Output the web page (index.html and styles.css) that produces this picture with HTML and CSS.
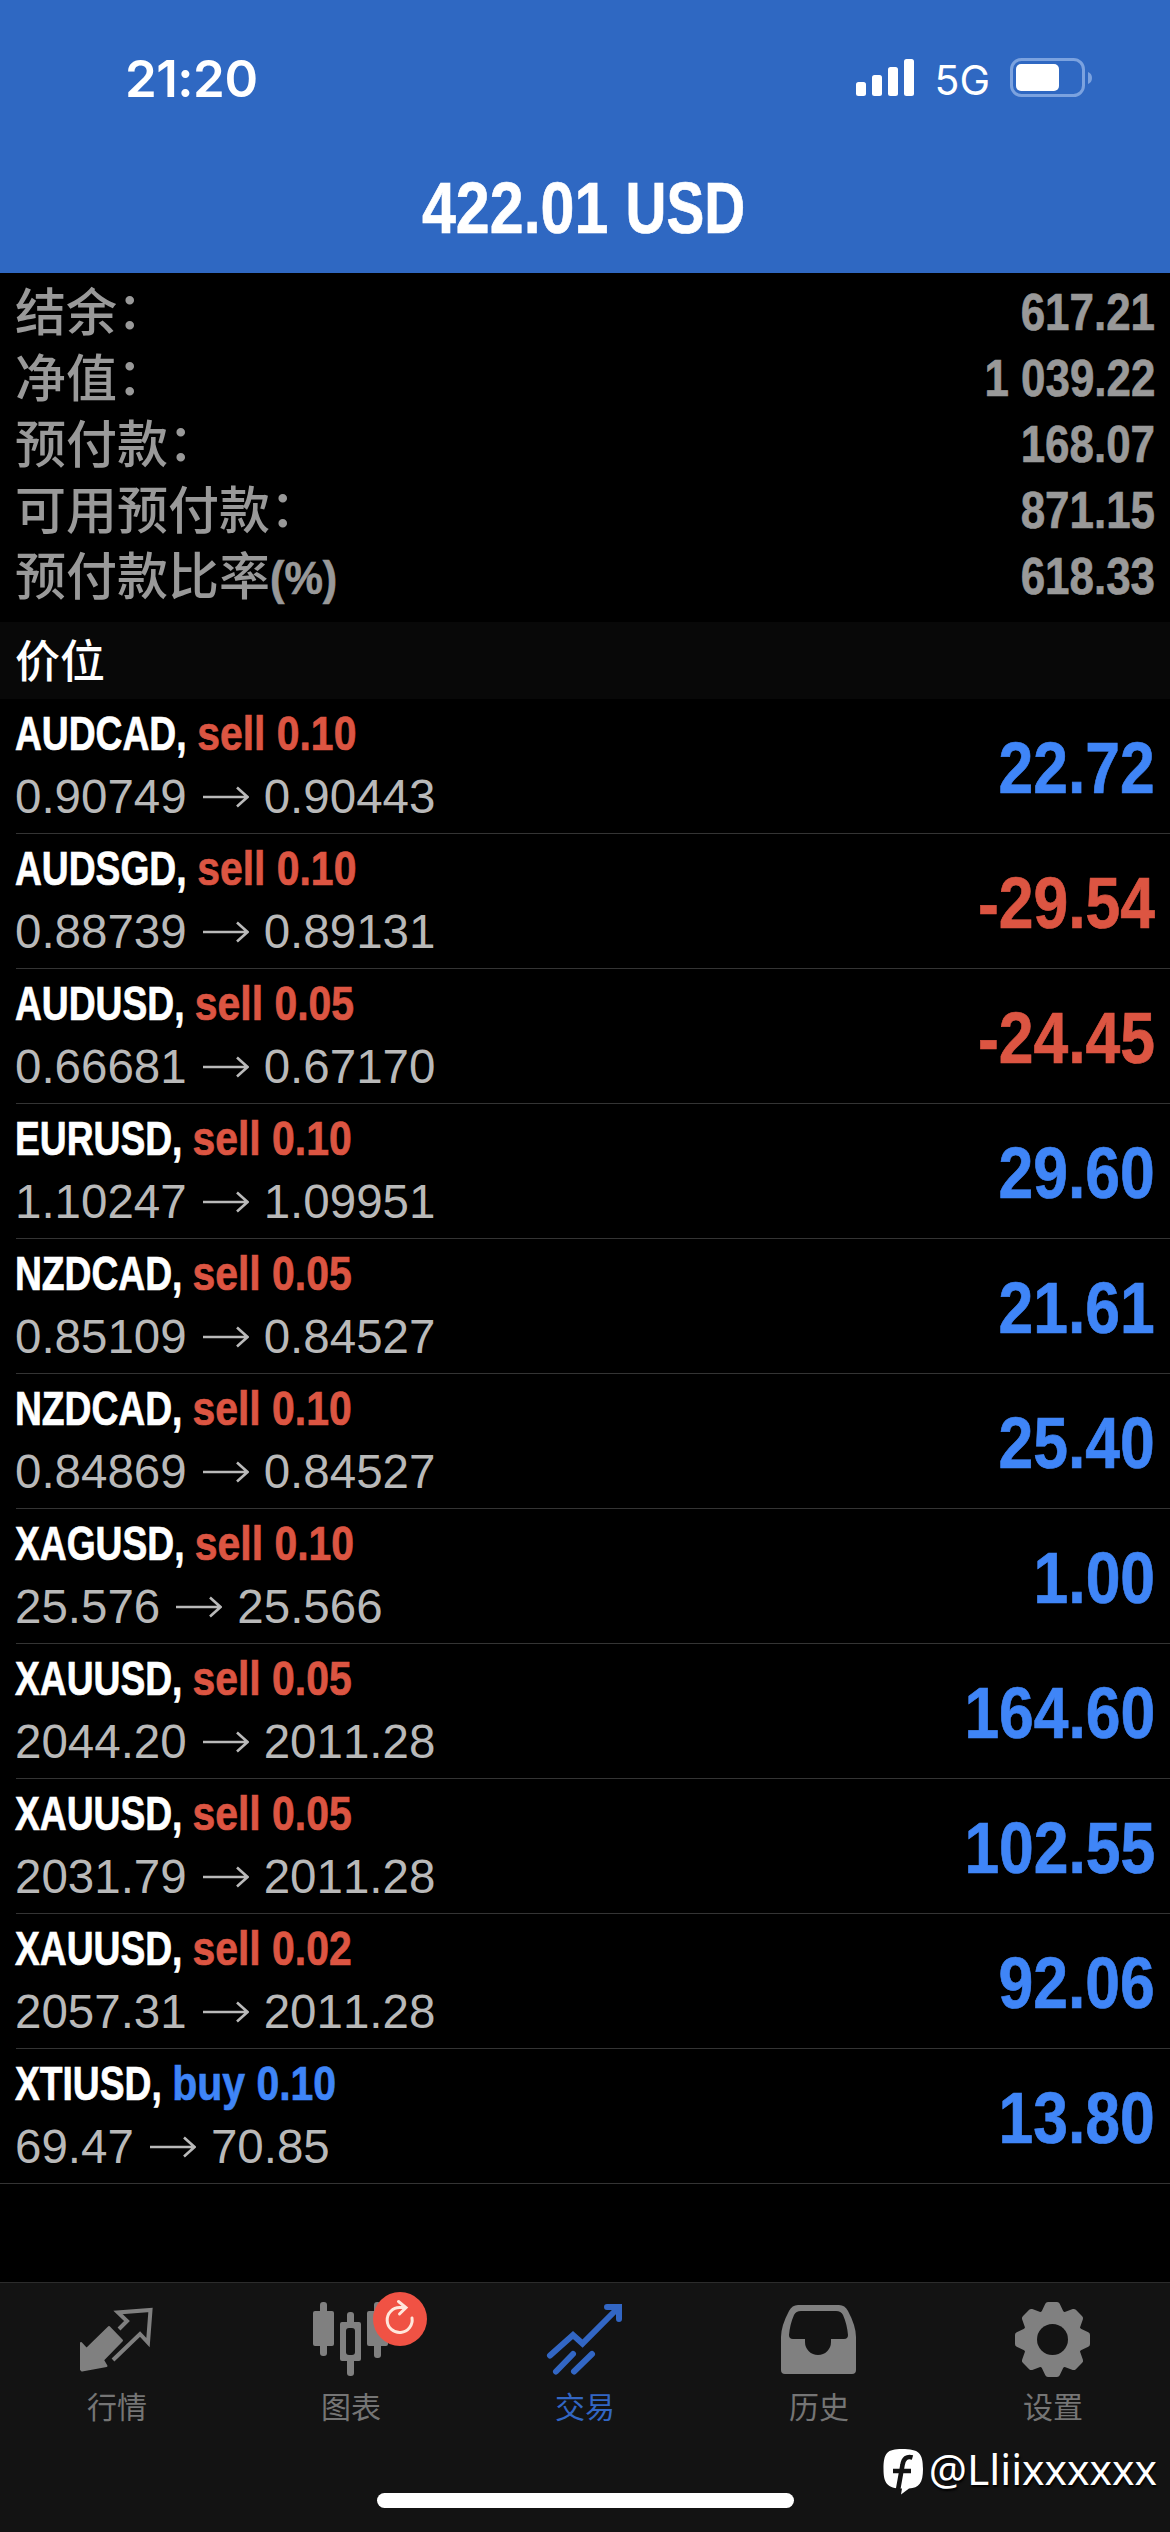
FILE: index.html
```html
<!DOCTYPE html>
<html lang="zh-CN">
<head>
<meta charset="utf-8">
<title>交易</title>
<link rel="stylesheet" href="styles.css">
</head>
<body>
<header class="header">
  <div class="status">
    <span class="time">21:20</span>
    <div class="status-right">
      <svg class="signal" width="60" height="38" viewBox="0 0 60 38" fill="#fff"><rect x="1" y="23" width="10" height="14" rx="2.5"/><rect x="17" y="16" width="10" height="21" rx="2.5"/><rect x="33" y="8" width="10" height="29" rx="2.5"/><rect x="49" y="0" width="10" height="37" rx="2.5"/></svg>
      <span class="network">5G</span>
      <svg class="battery" width="84" height="40" viewBox="0 0 84 40"><rect x="1.5" y="1.5" width="72" height="36" rx="10" fill="none" stroke="#7ba2df" stroke-width="3"/><rect x="6" y="6" width="43" height="27" rx="5" fill="#fff"/><path d="M78 14q4 1.500 4 6t-4 6z" fill="#7ba2df"/></svg>
    </div>
  </div>
  <h1 class="title">422.01 <span>USD</span></h1>
</header>

<dl class="summary">
  <div><dt>结余<i>：</i></dt><dd>617.21</dd></div>
  <div><dt>净值<i>：</i></dt><dd>1 039.22</dd></div>
  <div><dt>预付款<i>：</i></dt><dd>168.07</dd></div>
  <div><dt>可用预付款<i>：</i></dt><dd>871.15</dd></div>
  <div><dt>预付款比率<span class="unit">(%)</span></dt><dd>618.33</dd></div>
</dl>

<h2 class="section">价位</h2>

<svg width="0" height="0" class="defs"><symbol id="arrow" viewBox="0 0 46 22"><path d="M0 11H44M34 1.500L44.500 11L34 20.500" fill="none" stroke="#b9b9b9" stroke-width="2.600"/></symbol></svg>

<ul class="positions">
  <li><div class="deal"><p class="name">AUDCAD, <b class="sell">sell 0.10</b></p><p class="prices">0.90749<svg><use href="#arrow"/></svg>0.90443</p></div><strong class="up">22.72</strong></li>
  <li><div class="deal"><p class="name">AUDSGD, <b class="sell">sell 0.10</b></p><p class="prices">0.88739<svg><use href="#arrow"/></svg>0.89131</p></div><strong class="down">-29.54</strong></li>
  <li><div class="deal"><p class="name">AUDUSD, <b class="sell">sell 0.05</b></p><p class="prices">0.66681<svg><use href="#arrow"/></svg>0.67170</p></div><strong class="down">-24.45</strong></li>
  <li><div class="deal"><p class="name">EURUSD, <b class="sell">sell 0.10</b></p><p class="prices">1.10247<svg><use href="#arrow"/></svg>1.09951</p></div><strong class="up">29.60</strong></li>
  <li><div class="deal"><p class="name">NZDCAD, <b class="sell">sell 0.05</b></p><p class="prices">0.85109<svg><use href="#arrow"/></svg>0.84527</p></div><strong class="up">21.61</strong></li>
  <li><div class="deal"><p class="name">NZDCAD, <b class="sell">sell 0.10</b></p><p class="prices">0.84869<svg><use href="#arrow"/></svg>0.84527</p></div><strong class="up">25.40</strong></li>
  <li><div class="deal"><p class="name">XAGUSD, <b class="sell">sell 0.10</b></p><p class="prices">25.576<svg><use href="#arrow"/></svg>25.566</p></div><strong class="up">1.00</strong></li>
  <li><div class="deal"><p class="name">XAUUSD, <b class="sell">sell 0.05</b></p><p class="prices">2044.20<svg><use href="#arrow"/></svg>2011.28</p></div><strong class="up">164.60</strong></li>
  <li><div class="deal"><p class="name">XAUUSD, <b class="sell">sell 0.05</b></p><p class="prices">2031.79<svg><use href="#arrow"/></svg>2011.28</p></div><strong class="up">102.55</strong></li>
  <li><div class="deal"><p class="name">XAUUSD, <b class="sell">sell 0.02</b></p><p class="prices">2057.31<svg><use href="#arrow"/></svg>2011.28</p></div><strong class="up">92.06</strong></li>
  <li><div class="deal"><p class="name">XTIUSD, <b class="buy">buy 0.10</b></p><p class="prices">69.47<svg><use href="#arrow"/></svg>70.85</p></div><strong class="up">13.80</strong></li>
</ul>

<footer class="footer">
  <nav class="tabs">
    <a class="tab"><svg viewBox="37 2290 160 92"><path d="M81 2343l5.500 6L109 2327l13 13.500L103 2360l3.500 6L82 2370.500l-1-1z" fill="#808080" stroke="#808080" stroke-width="2" stroke-linejoin="round"/><path d="M119 2329L127 2321L118 2312.500L150.500 2310L148 2342.500L140 2334L113 2360" fill="none" stroke="#808080" stroke-width="4"/></svg><span>行情</span></a>
    <a class="tab"><svg viewBox="271 2290 160 92"><g fill="#808080"><rect x="313" y="2311" width="21" height="35" rx="2"/><rect x="320" y="2302" width="7" height="54" rx="3"/><rect x="367" y="2311" width="21" height="35" rx="2"/><rect x="374" y="2302" width="7" height="56" rx="3"/><rect x="340" y="2322" width="21" height="39" rx="2"/><rect x="347" y="2312" width="7" height="64" rx="3"/></g><rect x="346" y="2328" width="9" height="27" rx="3" fill="#131313"/><circle cx="400" cy="2319" r="27" fill="#f05244"/><path d="M412 2318A12.500 12.500 0 1 1 400 2307.500H405M398.500 2301.500L406 2307.500L399.500 2314" fill="none" stroke="#ffe7dc" stroke-width="3" stroke-linecap="round"/></svg><span>图表</span></a>
    <a class="tab active"><svg viewBox="505 2290 160 92"><g fill="none" stroke="#3266c4" stroke-width="6" stroke-linecap="round"><path d="M550 2355.500L573 2335L582.500 2343.500L617 2309"/><path d="M556 2371.500L573 2354M574 2371.500L592 2354"/><path d="M607 2307H619V2319"/></g></svg><span>交易</span></a>
    <a class="tab"><svg viewBox="739 2290 160 92"><path fill="#808080" fill-rule="evenodd" d="M798 2305H839Q845 2305 848 2311Q856 2326 856 2337V2370Q856 2374 852 2374H785Q781 2374 781 2370V2337Q781 2326 789 2311Q792 2305 798 2305ZM801 2311Q796 2311 794 2315Q790 2324 789 2335Q789 2339 793 2339H805V2342A13 13 0 0 0 831 2342V2339H844Q848 2339 848 2335Q847 2324 843 2315Q841 2311 836 2311Z"/></svg><span>历史</span></a>
    <a class="tab"><svg viewBox="973 2290 160 92"><g fill="#808080" stroke="#808080" stroke-width="6" stroke-linejoin="round" transform="translate(1052.500 2339.500)"><circle r="27"/><path id="t" d="M-9-25L-4.500-34.500H4.500L9-25V25L4.500 34.500H-4.500L-9 25Z"/><use href="#t" transform="rotate(45)"/><use href="#t" transform="rotate(90)"/><use href="#t" transform="rotate(135)"/></g><circle cx="1052.500" cy="2339.500" r="15.500" fill="#131313"/></svg><span>设置</span></a>
  </nav>
  <div class="home"></div>
  <div class="watermark"><svg width="42" height="48" viewBox="882 2448 42 48"><path d="M902 2449C919 2449 923 2453 923 2469C923 2483 919 2488 909 2488.500L901 2494.500L902 2488.500C887 2488.500 883.500 2483 883.500 2469C883.500 2453 887 2449 902 2449Z" fill="#fff"/><path d="M912.500 2457.500Q904 2455 902.500 2465L898 2490M893 2471H911" fill="none" stroke="#131313" stroke-width="4.600"/></svg><span>@Lliixxxxxx</span></div>
</footer>
</body>
</html>
```
FILE: styles.css
```css
* { box-sizing: border-box; margin: 0; padding: 0; }
body {
  width: 1170px;
  height: 2532px;
  background: #000;
  color: #fff;
  font-family: "Liberation Sans", "Noto Sans CJK SC", sans-serif;
  font-kerning: none;
  display: flex;
  flex-direction: column;
  overflow: hidden;
}
.header { height: 273px; background: #2f68c2; }
.status {
  height: 156px;
  padding: 0 76px 0 125px;
  display: flex;
  justify-content: space-between;
  align-items: center;
  font-family: Inter, sans-serif;
}
.time { font-size: 51px; font-weight: 600; letter-spacing: -0.5px; }
.status-right { display: flex; align-items: center; }
.network { font-size: 41px; line-height: 40px; margin: 3px 20px 0 19px; }

/* Condensed bold figures and symbols */
.title, .name, .summary dd, .unit, .positions strong {
  font-family: "Liberation Sans", sans-serif;
  font-weight: 700;
  -webkit-text-stroke: 0.7px currentColor;
}
.title { text-align: center; font-size: 73px; line-height: 104px; transform: translateX(3px) scaleX(0.835); }
.title span { display: inline-block; transform: scaleX(0.93); transform-origin: left; }
.summary { height: 349px; padding: 6px 15px 0 15px; color: #999; }
.summary div { display: flex; justify-content: space-between; height: 66px; line-height: 66px; }
.summary dt { font-family: "Noto Sans CJK SC", sans-serif; font-weight: 500; font-size: 51px; line-height: 60px; }
.summary i { font-style: normal; line-height: 0; vertical-align: 2px; margin-left: 0; }
.unit { display: inline-block; font-size: 47px; line-height: 1; vertical-align: 1px; transform: scaleX(0.92); transform-origin: left; }
.summary dd { font-size: 52px; transform: scaleX(0.845); transform-origin: right; }
.section {
  height: 77px;
  padding-left: 15px;
  background: #080808;
  font: 500 45px/73px "Noto Sans CJK SC", sans-serif;
}
.defs { position: absolute; }
.positions { list-style: none; }
.positions li {
  height: 135px;
  margin-left: 16px;
  padding-right: 15px;
  border-bottom: 1px solid #343434;
  display: flex;
  justify-content: space-between;
}
.positions li:last-child { margin-left: 0; padding-left: 16px; }
.deal { padding-top: 6px; margin-left: -1px; }
.name { font-size: 48px; line-height: 58px; white-space: nowrap; transform: scaleX(0.775); transform-origin: left; }
.name b { display: inline-block; transform: scaleX(1.1); transform-origin: left; }
.prices {
  font-size: 47.500px;
  line-height: 67px;
  color: #b9b9b9;
  display: flex;
  align-items: center;
}
.prices svg { width: 46px; height: 22px; margin: 0 15px 0 16px; }
.positions strong { font-size: 73px; line-height: 138px; transform: scaleX(0.855); transform-origin: right; }
.up, .buy { color: #3f85f7; }
.down, .sell { color: #dc5542; }
.footer {
  margin-top: auto;
  height: 250px;
  background: #131313;
  border-top: 1px solid #2c2c2c;
  position: relative;
}
.tabs { display: flex; padding-top: 7px; }
.tab {
  flex: 1;
  display: flex;
  flex-direction: column;
  align-items: center;
  color: #757575;
  font: 400 30px/44px "Noto Sans CJK SC", sans-serif;
}
.tab svg { width: 160px; height: 92px; }
.tab span { margin-top: 1px; }
.active { color: #3266c4; }
.home { position: absolute; left: 377px; top: 210px; width: 417px; height: 15px; border-radius: 8px; background: #fff; }
.watermark {
  position: absolute;
  right: 13px;
  top: 165px;
  display: flex;
  align-items: center;
  gap: 5px;
  font: 400 42.500px/48px "Noto Sans", sans-serif;
  text-shadow: 1px 2px 2px #000;
}
.watermark span { margin-top: -6px; }
```
